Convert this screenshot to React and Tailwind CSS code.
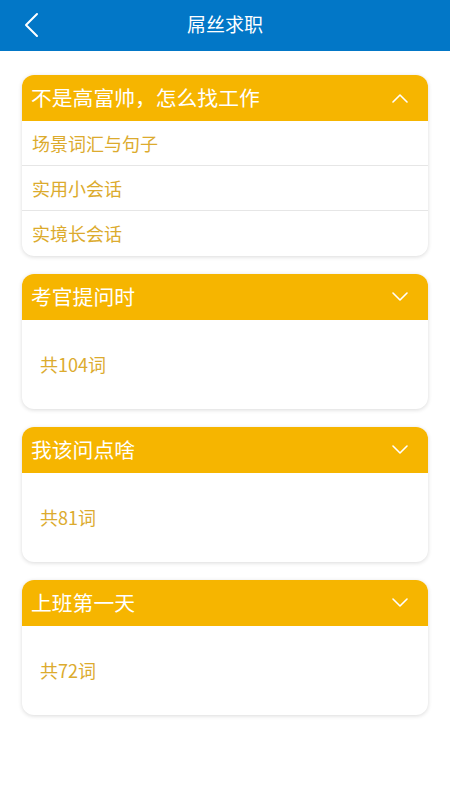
const font = { fontFamily: '"Noto Sans CJK SC", "Noto Sans", sans-serif' };

const groups = [
  { title: '不是高富帅，怎么找工作', open: true, items: ['场景词汇与句子', '实用小会话', '实境长会话'] },
  { title: '考官提问时', count: '共104词' },
  { title: '我该问点啥', count: '共81词' },
  { title: '上班第一天', count: '共72词' },
];

const Arrow = ({ up }) => (
  <svg width="16" height="10" viewBox="0 0 16 10" fill="none" stroke="white" strokeWidth="1.6" strokeLinecap="round" strokeLinejoin="round">
    {up ? <polyline points="1,9 8,2 15,9" /> : <polyline points="1,1 8,8 15,1" />}
  </svg>
);

export default function App() {
  return (
    <div className="w-[450px] min-h-[800px] bg-white" style={font}>
      {/* top bar */}
      <div className="relative h-[51px] bg-[#0277c7] flex items-center justify-center">
        <svg className="absolute left-[22px] top-[12px]" width="18" height="26" viewBox="0 0 18 26" fill="none" stroke="white" strokeWidth="2" strokeLinecap="round" strokeLinejoin="round">
          <polyline points="15,2 4,13 15,24" />
        </svg>
        <span className="text-white text-[19px] leading-none -mt-[5px]">屌丝求职</span>
      </div>

      <div className="px-[22px] pt-[24px] flex flex-col gap-[18px]">
        {groups.map((g) => (
          <div key={g.title} className="rounded-[12px] bg-white shadow-[0_1px_4px_rgba(0,0,0,0.15)] overflow-hidden">
            <div className="h-[46px] bg-[#f6b500] flex items-center justify-between pl-[9px] pr-[20px]">
              <span className="text-white text-[20.8px] leading-none -mt-[2px]">{g.title}</span>
              <Arrow up={g.open} />
            </div>
            {g.open ? (
              <div>
                {g.items.map((it, i) => (
                  <div
                    key={it}
                    className={`h-[45px] flex items-center pl-[10px] text-[#dcab2e] text-[18px] ${i < g.items.length - 1 ? 'border-b border-[#e6e6e6]' : ''}`}
                  >
                    {it}
                  </div>
                ))}
              </div>
            ) : (
              <div className="h-[89px] flex items-center pl-[18px] text-[#dcab2e] text-[18px]">
                {g.count}
              </div>
            )}
          </div>
        ))}
      </div>
    </div>
  );
}
